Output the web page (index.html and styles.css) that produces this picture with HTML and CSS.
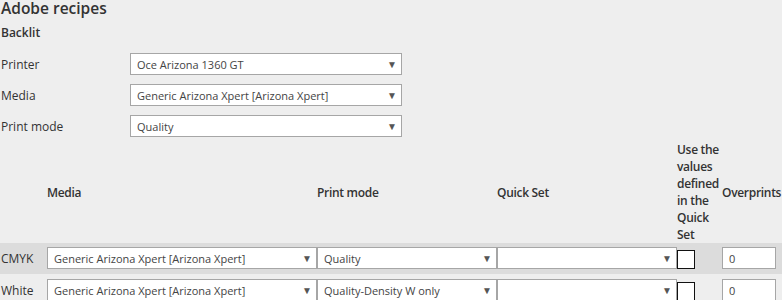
FILE: index.html
```html
<!DOCTYPE html>
<html lang="en">
<head>
  <meta charset="UTF-8">
  <meta name="viewport" content="width=device-width, initial-scale=1.0">
  <title>Adobe recipes</title>
  <link rel="stylesheet" href="styles.css">
</head>
<body>
  <h2 class="title">Adobe recipes</h2>
  <h3 class="sub">Backlit</h3>

  <div class="form">
    <div class="field">
      <label>Printer</label>
      <div class="select wide"><span>Oce Arizona 1360 GT</span><i class="arrow">&#9660;</i></div>
    </div>
    <div class="field">
      <label>Media</label>
      <div class="select wide"><span>Generic Arizona Xpert [Arizona Xpert]</span><i class="arrow">&#9660;</i></div>
    </div>
    <div class="field">
      <label>Print mode</label>
      <div class="select wide"><span>Quality</span><i class="arrow">&#9660;</i></div>
    </div>
  </div>

  <table class="recipes">
    <thead>
      <tr>
        <th class="c-name"></th>
        <th class="c-media">Media</th>
        <th class="c-mode">Print mode</th>
        <th class="c-quick">Quick Set</th>
        <th class="c-use">Use the values defined in the Quick Set</th>
        <th class="c-over">Overprints</th>
      </tr>
    </thead>
    <tbody>
      <tr class="alt">
        <td>CMYK</td>
        <td><div class="select"><span>Generic Arizona Xpert [Arizona Xpert]</span><i class="arrow">&#9660;</i></div></td>
        <td><div class="select"><span>Quality</span><i class="arrow">&#9660;</i></div></td>
        <td><div class="select"><span></span><i class="arrow">&#9660;</i></div></td>
        <td><span class="check"></span></td>
        <td><div class="input">0</div></td>
      </tr>
      <tr>
        <td>White</td>
        <td><div class="select"><span>Generic Arizona Xpert [Arizona Xpert]</span><i class="arrow">&#9660;</i></div></td>
        <td><div class="select"><span>Quality-Density W only</span><i class="arrow">&#9660;</i></div></td>
        <td><div class="select"><span></span><i class="arrow">&#9660;</i></div></td>
        <td><span class="check"></span></td>
        <td><div class="input">0</div></td>
      </tr>
    </tbody>
  </table>
</body>
</html>
```

FILE: styles.css
```css
body {
  margin: 0;
  background: #eeeeee;
  color: #333;
  font-family: "Open Sans", "Noto Sans", sans-serif;
  font-size: 12px;
  overflow: hidden;
}
.title {
  margin: -3px 0 0 1px;
  font-size: 15.5px;
  font-weight: 600;
  line-height: 22px;
}
.sub {
  margin: 5px 0 0 1px;
  font-size: 12px;
  font-weight: 600;
  line-height: 17px;
}
.form {
  display: flex;
  flex-direction: column;
  gap: 9px;
  margin-top: 12px;
}
.field {
  display: flex;
  align-items: center;
}
.field label {
  width: 130px;
  padding-left: 1px;
  box-sizing: border-box;
}
.select {
  display: flex;
  align-items: center;
  justify-content: space-between;
  box-sizing: border-box;
  height: 22px;
  padding: 0 4px 0 6px;
  background: #fff;
  border: 1px solid #a6a6a6;
  font-size: 11px;
  color: #444;
  white-space: nowrap;
}
.select.wide {
  width: 272px;
}
.arrow {
  font-style: normal;
  font-size: 10px;
  color: #555;
}
.recipes {
  border-collapse: collapse;
  table-layout: fixed;
  width: 782px;
  margin-top: 4px;
}
.recipes th {
  text-align: left;
  font-weight: 600;
  line-height: 17px;
  letter-spacing: -0.3px;
  padding: 0;
  vertical-align: middle;
  height: 102px;
}
.recipes td {
  padding: 4px 0 5px 0;
  vertical-align: middle;
}
.recipes td:first-child {
  padding-left: 1px;
}
.c-name { width: 47px; }
.c-media { width: 270px; }
.c-mode { width: 180px; }
.c-quick { width: 180px; }
.c-use { width: 45px; }
.c-over { width: 60px; }
.recipes tr.alt td {
  background: #dcdcdc;
}
.recipes tbody tr + tr td {
  border-top: 1px solid #eeeeee;
}
.check {
  display: block;
  width: 16px;
  height: 17px;
  margin-top: 2px;
  background: #fff;
  border: 1px solid #111;
}
.input {
  box-sizing: border-box;
  width: 54px;
  height: 22px;
  padding: 3px 6px;
  background: #fff;
  border: 1px solid #a6a6a6;
  font-size: 11px;
  color: #444;
}
```
